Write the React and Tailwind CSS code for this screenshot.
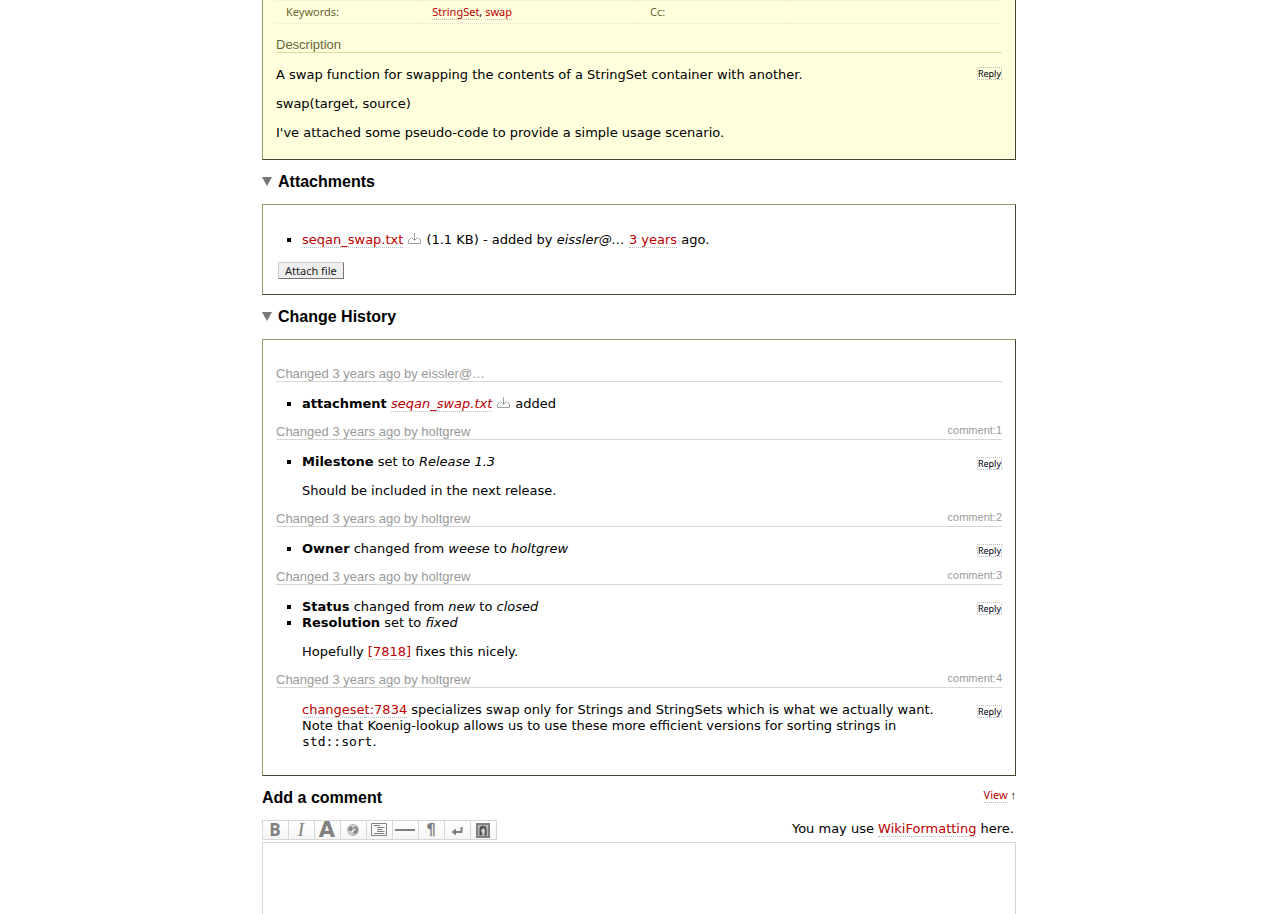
import React from "react";

const SANS = "font-['DejaVu_Sans',sans-serif]";
const ARIAL = "font-['Liberation_Sans',sans-serif]";

function Link({ children, className = "" }) {
  return (
    <a href="#" className={`border-b border-dotted border-[#bbbbbb] text-[#bb0000] ${className}`}>
      {children}
    </a>
  );
}

function Download() {
  return (
    <a href="#" aria-label="Download" className="mr-[5px] ml-[5px] inline-block">
      <svg width="13" height="12" viewBox="0 0 13 12" fill="none" stroke="#98a398" strokeWidth="1">
        <path d="M6.5 1V8M3.5 5.5L6.5 8.5L9.5 5.5M2.5 6L0.5 8.5V11.5H12.5V8.5L10.5 6" />
      </svg>
    </a>
  );
}

function Reply() {
  return (
    <button
      type="button"
      className="h-[13px] border border-dotted border-[#bbbbbb] bg-transparent font-['Noto_Sans',sans-serif] text-[9px] leading-[11px] text-[#000011]"
    >
      Reply
    </button>
  );
}

function Fold({ children }) {
  return (
    <h2 className="my-3 font-['Liberation_Sans',sans-serif] text-base leading-5 font-bold">
      <a href="#" className="flex items-center gap-[6px]">
        <svg width="10" height="10" viewBox="0 0 10 10">
          <path d="M0 0H10L5 9Z" fill="#777777" />
        </svg>
        {children}
      </a>
    </h2>
  );
}

function Change({ author, number, children }) {
  return (
    <section className="mb-[13px]">
      <h3 className="mb-[14px] flex h-[15px] justify-between border-b border-[#d7d7d7] font-['Liberation_Sans',sans-serif] text-[13px] leading-[13px] text-[#999999]">
        <span>
          Changed{" "}
          <a href="#" className="border-b border-dotted border-[#bbbbbb]">
            3 years
          </a>{" "}
          ago by {author}
        </span>
        {number && (
          <a href="#" className="text-[11px] leading-[11px]">
            comment:{number}
          </a>
        )}
      </h3>
      <div className="flex items-start justify-between">
        <div className="mr-4 flex-1">{children}</div>
        {number && (
          <div className="flex pt-[3px]">
            <Reply />
          </div>
        )}
      </div>
    </section>
  );
}

function Items({ children }) {
  return <ul className="list-[square] pl-[26px]">{children}</ul>;
}

function Tool({ label, children }) {
  return (
    <button
      type="button"
      aria-label={label}
      className="flex h-[18px] w-[26px] items-center justify-center border-r border-[#d7d7d7] bg-linear-to-b from-white to-[#f5f5f5] pr-px text-[#808080]"
    >
      {children}
    </button>
  );
}

function Icon({ children }) {
  return (
    <svg width="22" height="18" viewBox="0 0 22 18" fill="none" stroke="#808080">
      {children}
    </svg>
  );
}

function Toolbar() {
  return (
    <div className="flex h-5 border border-r-0 border-[#d7d7d7]">
      <Tool label="Bold">
        <span className="font-['Open_Sans',sans-serif] text-[17px] leading-[18px] font-bold">B</span>
      </Tool>
      <Tool label="Italic">
        <span className="font-['Liberation_Serif',serif] text-[19px] leading-[18px] italic">I</span>
      </Tool>
      <Tool label="Heading">
        <span className="font-['DejaVu_Sans',sans-serif] text-[21px] leading-[18px] font-bold">A</span>
      </Tool>
      <Tool label="Link">
        <Icon>
          <circle cx="11" cy="9" r="5.5" fill="#cccccc" stroke="#b5b5b5" />
          <path d="M6.5 7L9 5L11 7.5L9.5 10L7 10ZM11.5 6.5L14.5 5L16 8.5L15 12L12 13L11 11Z" fill="#858585" stroke="none" />
          <path d="M10 11L13.5 7.5" stroke="#f0f0f0" strokeWidth="1.5" />
        </Icon>
      </Tool>
      <Tool label="Code block">
        <Icon>
          <path d="M3.5 2.5H18.5V14.5H3.5ZM5.5 4.5H12M9 6.5H16.5M9 8.5H14.5M9 10.5H16.5M6 12.5H16.5" />
        </Icon>
      </Tool>
      <Tool label="Horizontal rule">
        <Icon>
          <path d="M1 9H21" strokeWidth="2" />
        </Icon>
      </Tool>
      <Tool label="New paragraph">
        <span className="font-['DejaVu_Sans',sans-serif] text-[15px] leading-[18px] font-bold">¶</span>
      </Tool>
      <Tool label="Line break">
        <Icon>
          <path d="M15.5 6V11H8" strokeWidth="2" />
          <path d="M10 7.5V14.5L5.5 11Z" fill="#808080" stroke="none" />
        </Icon>
      </Tool>
      <Tool label="Image">
        <Icon>
          <path d="M5 3H17V16H5Z" fill="#b5b5b5" strokeWidth="2" />
          <path d="M7.5 14.5V8C7.5 3.5 14.5 3.5 14.5 8V14.5H12.5L13 9L11.5 6.5L9.5 9L10.5 12L9.5 14.5Z" fill="#505050" stroke="none" />
          <path d="M9.5 8.5H12.5V11.5L11 12.5L9.5 11Z" fill="#d5d5d5" stroke="none" />
        </Icon>
      </Tool>
    </div>
  );
}

const BOX = "border border-t-[#999966] border-l-[#999966] border-r-[#444433] border-b-[#444433]";

export default function App() {
  return (
    <div className={`flex min-h-screen flex-col bg-white text-[13px] leading-4 text-black ${SANS}`}>
      <main className="mx-auto flex w-full max-w-[754px] flex-1 flex-col">
        <section className={`bg-[#ffffdd] px-[13px] pb-[18px] ${BOX} border-t-0`}>
          <table className="w-full table-fixed border-y border-dotted border-[#e3e3d3] font-['Noto_Sans',sans-serif] text-[11px] leading-[22px]">
            <tbody>
              <tr>
                <th className="w-1/5 px-[10px] py-0 text-left font-normal text-[#666633]">Keywords:</th>
                <td className="w-3/10 px-[11px] py-0">
                  <Link>StringSet</Link>, <Link>swap</Link>
                </td>
                <th className="w-1/5 px-[11px] py-0 text-left font-normal text-[#666633]">Cc:</th>
                <td />
              </tr>
            </tbody>
          </table>
          <h3 className={`mt-[14px] mb-[14px] h-[15px] border-b border-[#dddd99] text-[13px] leading-[13px] text-[#666633] ${ARIAL}`}>
            Description
          </h3>
          <div className="flex items-start justify-between">
            <div className="flex flex-col gap-[13px]">
              <p>A swap function for swapping the contents of a StringSet container with another.</p>
              <p>swap(target, source)</p>
              <p>I've attached some pseudo-code to provide a simple usage scenario.</p>
            </div>
            <Reply />
          </div>
        </section>

        <Fold>Attachments</Fold>
        <section className={`px-[13px] pt-[27px] pb-[15px] ${BOX}`}>
          <Items>
            <li>
              <Link>seqan_swap.txt</Link>
              <Download />
              (1.1 KB) - added by <em>eissler@…</em> <Link>3 years</Link> ago.
            </li>
          </Items>
          <button
            type="button"
            className="mt-[14px] ml-0.5 block h-[17px] border border-t-[#cccccc] border-r-[#777777] border-b-[#777777] border-l-[#cccccc] bg-[#eeeeee] px-[6px] font-['Noto_Sans',sans-serif] text-[11px] leading-[15px] text-[#222222]"
          >
            Attach file
          </button>
        </section>

        <Fold>Change History</Fold>
        <section className={`px-[13px] pt-[27px] pb-3 ${BOX}`}>
          <Change author="eissler@…">
            <Items>
              <li>
                <strong>attachment</strong> <Link className="italic">seqan_swap.txt</Link>
                <Download />
                added
              </li>
            </Items>
          </Change>
          <Change author="holtgrew" number="1">
            <Items>
              <li>
                <strong>Milestone</strong> set to <em>Release 1.3</em>
              </li>
            </Items>
            <p className="mt-[13px] pl-[26px]">Should be included in the next release.</p>
          </Change>
          <Change author="holtgrew" number="2">
            <Items>
              <li>
                <strong>Owner</strong> changed from <em>weese</em> to <em>holtgrew</em>
              </li>
            </Items>
          </Change>
          <Change author="holtgrew" number="3">
            <Items>
              <li>
                <strong>Status</strong> changed from <em>new</em> to <em>closed</em>
              </li>
              <li>
                <strong>Resolution</strong> set to <em>fixed</em>
              </li>
            </Items>
            <p className="mt-[13px] pl-[26px]">
              Hopefully <Link>[7818]</Link> fixes this nicely.
            </p>
          </Change>
          <Change author="holtgrew" number="4">
            <p className="pl-[26px]">
              <Link>changeset:7834</Link> specializes swap only for Strings and StringSets which is what we actually want.
              Note that Koenig-lookup allows us to use these more efficient versions for sorting strings in{" "}
              <code className="font-['DejaVu_Sans_Mono',monospace]">std::sort</code>.
            </p>
          </Change>
        </section>

        <div className="my-3 flex justify-between">
          <h2 className={`text-base leading-5 font-bold ${ARIAL}`}>
            <label htmlFor="comment">Add a comment</label>
          </h2>
          <p className="font-['Noto_Sans',sans-serif] text-[11px] leading-[14px]">
            <Link>View</Link> ↑
          </p>
        </div>
        <div className="mb-0.5 flex items-start justify-between">
          <Toolbar />
          <p className="pr-0.5 leading-[18px]">
            You may use <Link>WikiFormatting</Link> here.
          </p>
        </div>
        <textarea id="comment" className="block w-full flex-1 resize-none border border-b-0 border-[#d7d7d7] bg-white p-1 outline-none" />
      </main>
    </div>
  );
}
